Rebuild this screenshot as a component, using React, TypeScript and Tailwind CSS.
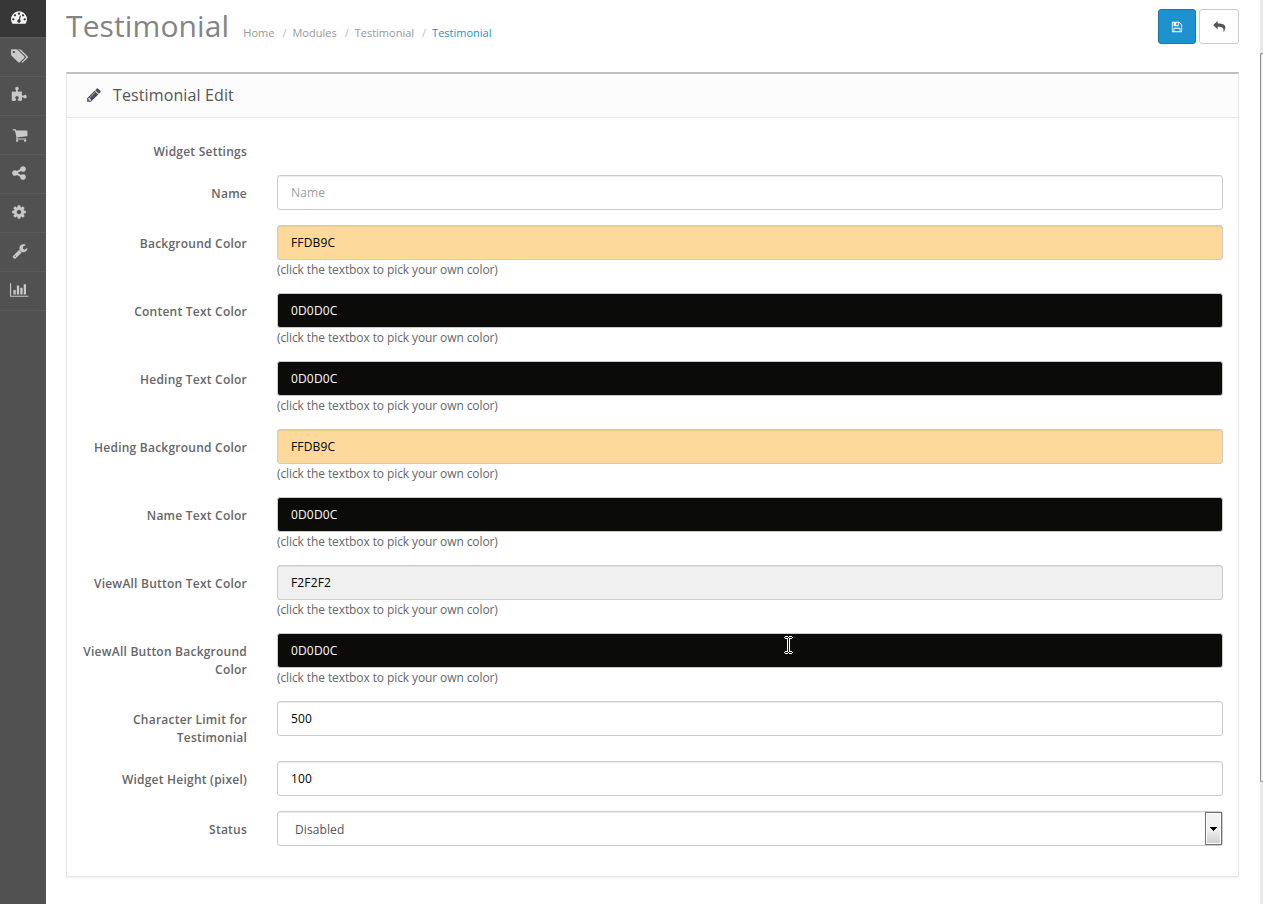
import React from "react";

const ICONS = {
  dashboard:
    "M384 1152q0-53-37.5-90.5t-90.5-37.5-90.5 37.5-37.5 90.5 37.5 90.5 90.5 37.5 90.5-37.5 37.5-90.5zm192-448q0-53-37.5-90.5t-90.5-37.5-90.5 37.5-37.5 90.5 37.5 90.5 90.5 37.5 90.5-37.5 37.5-90.5zm428 481l101-382q6-26-7.5-48.5t-38.5-29.5-48 6.5-30 39.5l-101 382q-60 5-107 43.5t-63 98.5q-20 77 20 146t117 89 146-20 89-117q16-60-6-117t-72-91zm660-33q0-53-37.5-90.5t-90.5-37.5-90.5 37.5-37.5 90.5 37.5 90.5 90.5 37.5 90.5-37.5 37.5-90.5zm-640-640q0-53-37.5-90.5t-90.5-37.5-90.5 37.5-37.5 90.5 37.5 90.5 90.5 37.5 90.5-37.5 37.5-90.5zm448 192q0-53-37.5-90.5t-90.5-37.5-90.5 37.5-37.5 90.5 37.5 90.5 90.5 37.5 90.5-37.5 37.5-90.5zm320 448q0 261-141 483-19 29-54 29h-1402q-35 0-54-29-141-221-141-483 0-182 71-348t191-286 286-191 348-71 348 71 286 191 191 286 71 348z",
  tags: "M448 448q0-53-37.5-90.5t-90.5-37.5-90.5 37.5-37.5 90.5 37.5 90.5 90.5 37.5 90.5-37.5 37.5-90.5zm1067 576q0 53-37 90l-491 492q-39 37-91 37-53 0-90-37l-715-716q-38-37-64.5-101t-26.5-117v-416q0-52 38-90t90-38h416q53 0 117 26.5t102 64.5l715 714q37 39 37 91zm384 0q0 53-37 90l-491 492q-39 37-91 37-36 0-59-14t-53-45l470-470q37-37 37-90 0-52-37-91l-715-714q-38-38-102-64.5t-117-26.5h224q53 0 117 26.5t102 64.5l715 714q37 39 37 91z",
  puzzle:
    "M1755 1083q0 81-44.5 135t-123.5 54q-41 0-77.5-17.5t-59-38-56.5-38-71-17.5q-110 0-110 124 0 39 16 115t15 115v5q-22 0-33 1-34 3-97.5 11.5t-115.5 13.5-98 5q-61 0-103-26.5t-42-83.5q0-37 17.5-71t38-56.5 38-59 17.5-77.5q0-79-54-123.5t-135-44.5q-84 0-143 45.5t-59 127.5q0 43 15 83t33.5 64.5 33.5 53 15 50.5q0 45-46 89-37 35-117 35-95 0-245-24-9-2-27.5-4t-27.5-4l-13-2q-1 0-3-1-2 0-2-1v-1024q2 1 17.5 3.5t34 5 21.5 3.5q150 24 245 24 80 0 117-35 46-44 46-89 0-22-15-50.5t-33.5-53-33.5-64.5-15-83q0-82 59-127.5t144-45.5q80 0 134 44.5t54 123.5q0 41-17.5 77.5t-38 59-38 56.5-17.5 71q0 57 42 83.5t103 26.5q64 0 180-15t163-17v2q-1 2-3.5 17.5t-5 34-3.5 21.5q-24 150-24 245 0 80 35 117 44 46 89 46 22 0 50.5-15t53-33.5 64.5-33.5 83-15q82 0 127.5 59t45.5 143z",
  cart: "M704 1536q0 52-38 90t-90 38-90-38-38-90 38-90 90-38 90 38 38 90zm896 0q0 52-38 90t-90 38-90-38-38-90 38-90 90-38 90 38 38 90zm128-1088v512q0 24-16.5 42.5t-40.5 21.5l-1044 122q13 60 13 70 0 16-24 64h920q26 0 45 19t19 45-19 45-45 19h-1024q-26 0-45-19t-19-45q0-11 8-31.5t16-36 21.5-40 15.5-29.5l-177-823h-204q-26 0-45-19t-19-45 19-45 45-19h256q16 0 28.5 6.5t19.5 15.5 13 24.5 8 26 5.5 29.5 4.5 26h1201q26 0 45 19t19 45z",
  share:
    "M1344 1024q133 0 226.5 93.5t93.5 226.5-93.5 226.5-226.5 93.5-226.5-93.5-93.5-226.5q0-12 2-34l-360-180q-92 86-218 86-133 0-226.5-93.5t-93.5-226.5 93.5-226.5 226.5-93.5q126 0 218 86l360-180q-2-22-2-34 0-133 93.5-226.5t226.5-93.5 226.5 93.5 93.5 226.5-93.5 226.5-226.5 93.5q-126 0-218-86l-360 180q2 22 2 34t-2 34l360 180q92-86 218-86z",
  cog: "M1152 896q0-106-75-181t-181-75-181 75-75 181 75 181 181 75 181-75 75-181zm512-109v222q0 12-8 23t-20 13l-185 28q-19 54-39 91 35 50 107 138 10 12 10 25t-9 23q-27 37-99 108t-94 71q-12 0-26-9l-138-108q-44 23-91 38-16 136-29 186-7 28-36 28h-222q-14 0-24.5-8.5t-11.5-21.5l-28-184q-49-16-90-37l-141 107q-10 9-25 9-14 0-25-11-126-114-165-168-7-10-7-23 0-12 8-23 15-21 51-66.5t54-70.5q-27-50-41-99l-183-27q-13-2-21-12.5t-8-23.5v-222q0-12 8-23t19-13l186-28q14-46 39-92-40-57-107-138-10-12-10-24 0-10 9-23 26-36 98.5-107.5t94.5-71.5q13 0 26 10l138 107q44-23 91-38 16-136 29-186 7-28 36-28h222q14 0 24.5 8.5t11.5 21.5l28 184q49 16 90 37l142-107q9-9 24-9 13 0 25 10 129 119 165 170 7 8 7 22 0 12-8 23-15 21-51 66.5t-54 70.5q26 50 41 98l183 28q13 2 21 12.5t8 23.5z",
  wrench:
    "M448 1472q0-26-19-45t-45-19-45 19-19 45 19 45 45 19 45-19 19-45zm644-420l-682 682q-37 37-90 37-52 0-91-37l-106-108q-38-36-38-90 0-53 38-91l681-681q39 98 114.5 173.5t173.5 114.5zm634-435q0 39-23 106-47 134-164.5 217.5t-258.5 83.5q-185 0-316.5-131.5t-131.5-316.5 131.5-316.5 316.5-131.5q58 0 121.5 16.5t107.5 46.5q16 11 16 28t-16 28l-293 169v224l193 107q5-3 79-48.5t135.5-81 70.5-35.5q15 0 23.5 10t8.5 25z",
  chart:
    "M640 896v512H384V896h256zm384-512v1024H768V384h256zm1024 1152v128H0V128h128v1408h1920zM1408 640v768h-256V640h256zm384-384v1152h-256V256h256z",
  save: "M512 1536h768v-384h-768v384zm896 0h128v-896q0-14-10-38.5t-20-34.5l-281-281q-10-10-34-20t-39-10v416q0 40-28 68t-68 28h-576q-40 0-68-28t-28-68v-416h-128v1280h128v-416q0-40 28-68t68-28h832q40 0 68 28t28 68v416zm-384-928v-320q0-13-9.5-22.5t-22.5-9.5h-192q-13 0-22.5 9.5t-9.5 22.5v320q0 13 9.5 22.5t22.5 9.5h192q13 0 22.5-9.5t9.5-22.5zm640 32v928q0 40-28 68t-68 28h-1344q-40 0-68-28t-28-68v-1344q0-40 28-68t68-28h928q40 0 88 20t76 48l280 280q28 28 48 76t20 88z",
  reply:
    "M1792 1120q0 166-127 451-3 7-10.5 24t-13.5 30-13 22q-12 17-28 17-15 0-23.5-10t-8.5-25q0-9 2.5-26.5t2.5-23.5q5-68 5-123 0-112-19.5-200.5t-54-153.5-93-109.5-125.5-71-163-37.5-196-12h-224v256q0 26-19 45t-45 19-45-19l-512-512q-19-19-19-45t19-45l512-512q19-19 45-19t45 19 19 45v256h224q713 0 875 403 53 134 53 333z",
  pencil:
    "M491 1536l91-91-235-235-91 91v107h128v128h107zm523-928q0-22-22-22-10 0-17 7l-542 542q-7 7-7 17 0 22 22 22 10 0 17-7l542-542q7-7 7-17zm-54-192l416 416-832 832h-416v-416zm683 96q0 53-37 90l-166 166-416-416 166-165q36-38 90-38 53 0 91 38l235 234q37 39 37 91z",
};

type IconName = keyof typeof ICONS;

function Icon({ name, className }: { name: IconName; className: string }) {
  return (
    <svg viewBox="0 0 1792 1792" fill="currentColor" overflow="visible" aria-hidden="true" className={className}>
      <path d={ICONS[name]} />
    </svg>
  );
}

const NAV: { name: IconName; icon: string }[] = [
  { name: "dashboard", icon: "mb-[3px] ml-[11px] size-4" },
  { name: "tags", icon: "mb-[2px] ml-[11px] size-4" },
  { name: "puzzle", icon: "mb-[2px] ml-[11px] size-4" },
  { name: "cart", icon: "mb-px ml-[11.5px] size-4" },
  { name: "share", icon: "mb-[2px] ml-[11px] size-4" },
  { name: "cog", icon: "mb-[2px] ml-[11px] size-4" },
  { name: "wrench", icon: "mb-[2px] ml-[11.5px] size-4" },
  { name: "chart", icon: "mb-[2px] ml-[10px] size-4" },
];

function Sidebar() {
  return (
    <nav className="w-[46px] shrink-0 bg-[#515151]">
      {NAV.map((item, i) => (
        <a
          key={item.name}
          className={
            i === 0
              ? "flex h-[38px] items-center border-b border-[#5a5a5a] bg-[#373737] text-[#f5f5f5]"
              : "flex h-[39px] items-center border-b border-[#5a5a5a] text-[#c9c9c9]"
          }
        >
          <Icon name={item.name} className={item.icon} />
        </a>
      ))}
    </nav>
  );
}

const BOX =
  "block h-[35px] w-full rounded-[3px] border border-[#cccccc] px-[13px] pb-px text-[12px] tracking-[0.15px] shadow-[inset_0_1px_1px_rgba(0,0,0,0.075)] outline-none placeholder:text-[#a0a0a0]";

function Row({ label, children }: { label: string; children?: React.ReactNode }) {
  return (
    <div className="mb-[15px] flex">
      <label className="-mb-px w-[195px] shrink-0 pt-[10px] pr-[15px] pl-[15px] text-right text-[12px] leading-[18px] font-semibold tracking-[0.23px] text-[#666666]">
        {label}
      </label>
      <div className="flex-1 px-[15px]">{children}</div>
    </div>
  );
}

const COLORS = [
  { label: "Background Color", value: "FFDB9C", tone: "bg-[#fdd99b] text-black" },
  { label: "Content Text Color", value: "0D0D0C", tone: "bg-[#0b0b09] text-white" },
  { label: "Heding Text Color", value: "0D0D0C", tone: "bg-[#0b0b09] text-white" },
  { label: "Heding Background Color", value: "FFDB9C", tone: "bg-[#fdd99b] text-black" },
  { label: "Name Text Color", value: "0D0D0C", tone: "bg-[#0b0b09] text-white" },
  { label: "ViewAll Button Text Color", value: "F2F2F2", tone: "bg-[#f0f0f0] text-black" },
  { label: "ViewAll Button Background Color", value: "0D0D0C", tone: "bg-[#0b0b09] text-white" },
];

function Slash() {
  return <span className="pr-[6px] pl-[8px] text-[#bbbbbb]">/</span>;
}

function Header() {
  return (
    <header className="flex h-[72px] items-start justify-between">
      <div className="flex items-baseline">
        <h1 className="text-[30px] leading-[52px] tracking-[0.12px] text-[#848484]">Testimonial</h1>
        <ol className="ml-[14px] flex text-[11px] text-[#999999]">
          <li>Home</li>
          <li><Slash />Modules</li>
          <li><Slash />Testimonial</li>
          <li><Slash /><span className="text-[#1e91cf]">Testimonial</span></li>
        </ol>
      </div>
      <div className="flex gap-[3px] pt-[9px]">
        <button aria-label="Save" className="flex h-[35px] w-[38px] items-center justify-center rounded-[3px] border border-[#1978ab] bg-[#1e91cf] text-white">
          <Icon name="save" className="size-[12px]" />
        </button>
        <button aria-label="Back" className="flex h-[35px] w-[40px] items-center justify-center rounded-[3px] border border-[#cccccc] bg-white text-[#555555]">
          <Icon name="reply" className="size-[12px]" />
        </button>
      </div>
    </header>
  );
}

export default function App() {
  return (
    <div className="relative flex h-[904px] w-[1263px] overflow-hidden bg-white font-['Open_Sans',sans-serif] text-[12px] leading-[18px] text-[#666666]">
      <Sidebar />
      <main className="flex-1 pr-[21px] pl-[20px]">
        <Header />
        <section className="border border-t-2 border-[#e8e8e8] border-t-[#bfbfbf] shadow-[0_1px_1px_rgba(0,0,0,0.05)]">
          <div className="flex h-[44px] items-center border-b border-[#e8e8e8] bg-[#fcfcfc] pb-[2px] pl-[19px] text-[#4c4d5a]">
            <Icon name="pencil" className="size-4" />
            <h2 className="ml-[11px] text-[16px] tracking-[0.12px] text-[#555555]">Testimonial Edit</h2>
          </div>
          <form className="pt-[15px] pb-[15px]">
            <Row label="Widget Settings" />
            <Row label="Name">
              <input className={`${BOX} bg-white text-black`} placeholder="Name" />
            </Row>
            {COLORS.map((c) => (
              <Row key={c.label} label={c.label}>
                <input className={`${BOX} ${c.tone}`} defaultValue={c.value} />
                <p className="-mb-px pt-px text-[12px] leading-[18px] tracking-[-0.1px]">(click the textbox to pick your own color)</p>
              </Row>
            ))}
            <Row label="Character Limit for Testimonial">
              <input className={`${BOX} bg-white text-black`} defaultValue="500" />
            </Row>
            <Row label="Widget Height (pixel)">
              <input className={`${BOX} bg-white text-black`} defaultValue="100" />
            </Row>
            <Row label="Status">
              <div className="flex h-[35px] items-stretch rounded-[3px] border border-[#cccccc] bg-white shadow-[inset_0_1px_1px_rgba(0,0,0,0.075)]">
                <span className="flex flex-1 items-center pt-[2px] pl-[17px] tracking-[0.1px] text-[#555555]">Disabled</span>
                <span className="flex w-[17px] items-center justify-center border border-[#707070] bg-linear-to-b from-[#f2f2f2] from-50% to-[#cfcfcf] ring-1 ring-white ring-inset">
                  <svg viewBox="0 0 7 4" className="h-1 w-[7px]" shapeRendering="crispEdges">
                    <path d="M0 0h7v1H6v1H5v1H4v1H3V3H2V2H1V1H0z" fill="#000" />
                  </svg>
                </span>
              </div>
            </Row>
          </form>
        </section>
      </main>
      <div className="flex w-[3px] shrink-0 flex-col bg-[#e9e9e9] pt-[53px]">
        <div className="h-[729px] rounded-l-[2px] border border-r-0 border-[#8a8a8a] bg-[#f3f3f3]" />
      </div>
      <svg viewBox="0 0 9 18" className="absolute top-[636px] left-[784px] h-[18px] w-[9px]" shapeRendering="crispEdges">
        <path d="M1 0h3v1H1zM5 0h3v1H5zM0 1h1v1H0zM4 1h1v1H4zM8 1h1v1H8zM1 2h2v1H1zM6 2h2v1H6zM3 2h1v14H3zM5 2h1v14H5zM1 15h2v1H1zM6 15h2v1H6zM0 16h1v1H0zM4 16h1v1H4zM8 16h1v1H8zM1 17h3v1H1zM5 17h3v1H5z" fill="#fff" />
      </svg>
    </div>
  );
}
